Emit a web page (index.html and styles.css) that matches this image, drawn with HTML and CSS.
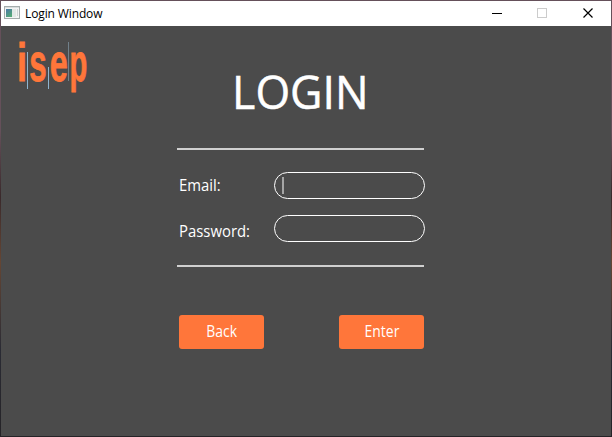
FILE: index.html
```html
<!DOCTYPE html>
<html lang="en">
<head>
<meta charset="utf-8">
<title>Login Window</title>
<link rel="stylesheet" href="styles.css">
</head>
<body>
<div class="window">
  <header class="titlebar">
    <svg class="app-icon" width="16" height="14" viewBox="0 0 16 14">
      <defs><linearGradient id="pane" x2="0.6" y2="1"><stop stop-color="#4a78a8"/><stop offset="1" stop-color="#55a878"/></linearGradient></defs>
      <rect x=".5" y=".5" width="15" height="12" fill="#f4f4f4" stroke="#a5acac"/>
      <rect x="1" y="1" width="14" height="1" fill="#d8dddd"/>
      <rect x="2" y="3" width="6" height="8" fill="url(#pane)"/>
      <rect x="8" y="3" width="4" height="8" fill="#e3e8e6"/>
      <rect x="13" y="3" width="1" height="7" fill="#d0d4d4"/>
    </svg>
    <span class="caption">Login Window</span>
    <svg class="controls" width="135" height="25" viewBox="0 0 135 25">
      <path d="M15 12.5h10" stroke="#000"/>
      <rect x="60.5" y="7.5" width="9" height="9" fill="none" stroke="#ccc"/>
      <path d="M106.5 7.5l9 9m0-9l-9 9" stroke="#000" stroke-width="1.2"/>
    </svg>
  </header>
  <main class="content">
    <svg class="logo" width="72" height="52" viewBox="18 40 72 52">
      <g class="logo-text">
        <text transform="translate(16.9 80.8) scale(.67 1)">i</text>
        <text transform="translate(29.3 80.8) scale(.58 1)">s</text>
        <text transform="translate(49.7 80.8) scale(.6 1)">e</text>
        <text transform="translate(69.4 80.8) scale(.54 1)">p</text>
      </g>
      <path d="M27.5 52v37M48.5 67v22" stroke="#8fb4cf"/>
      <path d="M68.5 42v39" stroke="#71808a"/>
    </svg>
    <form class="login">
      <h1><span>LOGIN</span></h1>
      <div class="fields">
        <label for="email"><span>Email:</span></label>
        <div class="input" id="email"><i class="caret"></i></div>
        <label for="password"><span>Password:</span></label>
        <div class="input" id="password"></div>
      </div>
      <div class="actions">
        <button type="button"><span>Back</span></button>
        <button type="button"><span>Enter</span></button>
      </div>
    </form>
  </main>
</div>
</body>
</html>
```
FILE: styles.css
```css
* { box-sizing: border-box; }
body { margin: 0; }
.window {
  width: 612px; height: 437px;
  border: 1px solid #3a3238;
  border-image: linear-gradient(#65505a 0 30%, #3a292b 45%, #654634 60%, #2a2b34 80%, #252327) 1;
  background: #4b4b4b;
  overflow: hidden;
}
.titlebar { height: 25px; background: #fff; display: flex; align-items: center; padding-left: 3px; }
.app-icon { flex: none; margin-top: -1px; }
.caption { font: 12px/24px "Open Sans", sans-serif; color: #000; margin-left: 5px; flex: 1; letter-spacing: -.12px; }
.controls { flex: none; margin-right: -1px; }
.content { display: flex; align-items: flex-start; height: 410px; }
.logo { flex: none; margin: 14px 0 0 17px; overflow: visible; }
.logo-text { font: bold 54px "Liberation Sans", sans-serif; fill: #ff763a; stroke: #ff763a; stroke-width: .8; }
.login { width: 247px; margin-left: 87px; font-family: "Open Sans", sans-serif; color: #fff; }
h1 { margin: 32px 0 0; font-size: 46px; font-weight: 400; line-height: 66px; height: 90px; text-align: center; -webkit-text-stroke: .5px #fff; }
h1 span { display: inline-block; transform: scaleX(.97); }
.fields {
  height: 119px;
  border-top: 2px solid #d0d0d0; border-bottom: 2px solid #d0d0d0;
  padding: 22px 0 0 2px;
  display: grid; grid-template-columns: 95px 151px; grid-template-rows: 27px 27px; row-gap: 16px;
}
label { font-size: 16px; line-height: 27px; }
label span { display: inline-block; transform: scaleX(.93); transform-origin: left; }
label[for="password"] { padding-top: 3px; }
.input { border: 1px solid #fff; border-radius: 13.5px; padding: 4px 0 0 7px; }
.caret { display: block; width: 2px; height: 17px; background: #a5a5a5; }
.actions { display: flex; justify-content: space-between; margin: 48px 0 0 2px; }
button { width: 85px; height: 34px; border: 0; border-radius: 3px; padding: 0 0 1px; background: #ff763a; color: #fff; font: 16px/33px "Open Sans", sans-serif; }
button span { display: inline-block; transform: scaleX(.87); }
```
